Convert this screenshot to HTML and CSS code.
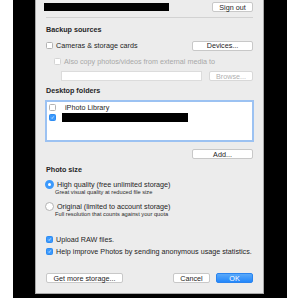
FILE: index.html
```html
<!DOCTYPE html>
<html lang="en">
<head>
  <meta charset="UTF-8" />
  <title>Google Photos Backup Preferences</title>
  <link rel="stylesheet" href="styles.css">
</head>
<body>
  <div class="screen">
    <div class="dialog">
      <div class="top-row">
        <div class="redacted account"></div>
        <div class="btn signout">Sign out</div>
      </div>
      <div class="rule"></div>

      <div class="heading">Backup sources</div>
      <div class="row row-cameras">
        <span class="check"></span>
        <span class="label">Cameras &amp; storage cards</span>
        <div class="btn devices">Devices...</div>
      </div>
      <div class="row row-also disabled">
        <span class="check"></span>
        <span class="label">Also copy photos/videos from external media to</span>
      </div>
      <div class="row row-field">
        <div class="field"></div>
        <div class="btn browse disabled">Browse...</div>
      </div>

      <div class="heading heading-folders">Desktop folders</div>
      <div class="list">
        <div class="list-item">
          <span class="check"></span>
          <span class="label">iPhoto Library</span>
        </div>
        <div class="list-item">
          <span class="check on">
            <svg viewBox="0 0 8 8" width="7" height="7"><path d="M2 4.2 L3.4 5.6 L6 2.2" fill="none" stroke="#fff" stroke-width="1"/></svg>
          </span>
          <div class="redacted folder"></div>
        </div>
      </div>
      <div class="row row-add">
        <div class="btn add">Add...</div>
      </div>

      <div class="heading heading-size">Photo size</div>
      <div class="option first">
        <div class="row">
          <span class="radio on"></span>
          <span class="label">High quality (free unlimited storage)</span>
        </div>
        <div class="hint">Great visual quality at reduced file size</div>
      </div>
      <div class="option">
        <div class="row">
          <span class="radio"></span>
          <span class="label">Original (limited to account storage)</span>
        </div>
        <div class="hint">Full resolution that counts against your quota</div>
      </div>

      <div class="row row-raw">
        <span class="check on">
          <svg viewBox="0 0 8 8" width="7" height="7"><path d="M2 4.2 L3.4 5.6 L6 2.2" fill="none" stroke="#fff" stroke-width="1"/></svg>
        </span>
        <span class="label">Upload RAW files.</span>
      </div>
      <div class="row row-stats">
        <span class="check on">
          <svg viewBox="0 0 8 8" width="7" height="7"><path d="M2 4.2 L3.4 5.6 L6 2.2" fill="none" stroke="#fff" stroke-width="1"/></svg>
        </span>
        <span class="label">Help improve Photos by sending anonymous usage statistics.</span>
      </div>

      <div class="footer">
        <div class="btn storage">Get more storage...</div>
        <div class="btn cancel">Cancel</div>
        <div class="btn ok">OK</div>
      </div>
    </div>
  </div>
</body>
</html>
```

FILE: styles.css
```css
body {
  margin: 0;
  background-color: #ffffff;
  font-family: 'Liberation Sans', Arial, sans-serif;
  font-size: 7.2px;
  color: #1e1e1e;
}

.screen {
  margin-left: 13px;
  width: 274px;
  height: 298px;
  background-color: #000;
  overflow: hidden;
}

.dialog {
  margin-left: 22px;
  width: 207px;
  height: 283px;
  padding: 0 10px 10px 10px;
  background-color: #ececec;
  border: 1px solid #a9a9a9;
  border-top: none;
  display: flex;
  flex-direction: column;
}

.top-row {
  margin-top: 2px;
  height: 10px;
  display: flex;
  align-items: center;
  justify-content: space-between;
}

.redacted {
  background-color: #000;
}

.redacted.account {
  width: 125px;
  height: 8px;
  margin-left: -2px;
}

.rule {
  margin-top: 5px;
  height: 1px;
  background-color: #d2d2d2;
}

.heading {
  margin-top: 7px;
  height: 10px;
  line-height: 10px;
  font-weight: bold;
  color: #262626;
}

.heading-folders {
  margin-top: 5px;
}

.heading-size {
  margin-top: 6px;
}

.row {
  display: flex;
  align-items: center;
  height: 10px;
}

.row-cameras {
  margin-top: 5px;
  height: 11px;
}

.row-also {
  margin-top: 5px;
  padding-left: 8px;
}

.row-field {
  margin-top: 5px;
  padding-left: 15px;
}

.row-add {
  margin-top: 7px;
  justify-content: flex-end;
}

.row-raw {
  margin-top: 17px;
}

.row-stats {
  margin-top: 2px;
}

.label {
  margin-left: 3px;
  white-space: nowrap;
}

.disabled {
  color: #a8a8a8;
}

.check {
  width: 7px;
  height: 7px;
  box-sizing: border-box;
  border: 1px solid #b3b3b3;
  border-radius: 1.5px;
  background-color: #fff;
  flex-shrink: 0;
  display: flex;
  align-items: center;
  justify-content: center;
}

.disabled .check {
  border-color: #d4d4d4;
}

.check.on {
  border-color: #2d8cf3;
  background-color: #3b99fc;
}

.check svg {
  display: block;
}

.radio {
  width: 9px;
  height: 9px;
  box-sizing: border-box;
  border: 1px solid #b3b3b3;
  border-radius: 50%;
  background-color: #fff;
  flex-shrink: 0;
  margin-left: -1px;
}

.radio.on {
  border: 3px solid #3b99fc;
  background-color: #fff;
}

.btn {
  height: 10px;
  box-sizing: border-box;
  border: 1px solid #c8c8c8;
  border-radius: 2px;
  background-color: #fff;
  display: flex;
  align-items: center;
  justify-content: center;
  white-space: nowrap;
  color: #1e1e1e;
}

.btn.signout {
  width: 41px;
}

.btn.devices {
  margin-left: auto;
  width: 61px;
}

.btn.add {
  width: 61px;
}

.btn.browse {
  margin-left: auto;
  width: 44px;
  color: #b0b0b0;
  border-color: #d8d8d8;
}

.field {
  width: 141px;
  height: 10px;
  background-color: #fff;
  border: 1px solid #dcdcdc;
  box-sizing: border-box;
}

.list {
  margin-top: 4px;
  margin-left: -1px;
  margin-right: -1px;
  height: 42px;
  box-sizing: border-box;
  border: 2px solid #9cc2f2;
  background-color: #fff;
  padding: 0 0 0 2px;
}

.list-item {
  display: flex;
  align-items: center;
  height: 10px;
}

.list-item .label {
  margin-left: 9px;
}

.redacted.folder {
  margin-left: 6px;
  width: 126px;
  height: 9px;
}

.option.first {
  margin-top: 5px;
}

.option {
  margin-top: 7px;
}

.option .row {
  height: 9px;
}

.hint {
  padding-left: 9px;
  font-size: 5.7px;
  line-height: 6px;
  color: #2a2a2a;
}

.footer {
  margin-top: auto;
  display: flex;
  height: 10px;
}

.btn.storage {
  width: 77px;
}

.btn.cancel {
  margin-left: auto;
  width: 37px;
}

.btn.ok {
  margin-left: 6px;
  width: 37px;
  border-color: #2a84ef;
  background: linear-gradient(#5aa9f9, #2387fb);
  color: #fff;
}
```
